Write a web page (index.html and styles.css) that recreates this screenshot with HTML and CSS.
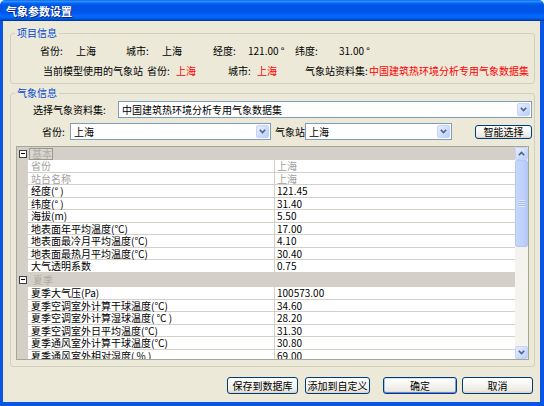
FILE: index.html
```html
<!DOCTYPE html>
<html lang="zh-CN">
<head>
<meta charset="utf-8">
<title>气象参数设置</title>
<link rel="stylesheet" href="styles.css">
</head>
<body>
<div class="window">
  <div class="titlebar">气象参数设置</div>
  <div class="frame">
    <div class="client">
      <fieldset class="group group-project">
        <legend>项目信息</legend>
        <div class="info-row info-row-1">
          <span class="cell w36">省份:</span>
          <span class="cell w50">上海</span>
          <span class="cell w36">城市:</span>
          <span class="cell w51">上海</span>
          <span class="cell w35">经度:</span>
          <span class="cell w47">121.00 °</span>
          <span class="cell w44">纬度:</span>
          <span class="cell">31.00 °</span>
        </div>
        <div class="info-row info-row-2">
          <span class="cell w104">当前模型使用的气象站</span>
          <span class="cell w29">省份:</span>
          <span class="cell w52 red">上海</span>
          <span class="cell w29">城市:</span>
          <span class="cell w48 red">上海</span>
          <span class="cell w64">气象站资料集:</span>
          <span class="cell red">中国建筑热环境分析专用气象数据集</span>
        </div>
      </fieldset>

      <fieldset class="group group-weather">
        <legend>气象信息</legend>
        <div class="form-row dataset-row">
          <span class="form-label dataset-label">选择气象资料集:</span>
          <div class="combo combo-dataset">
            <span class="combo-text">中国建筑热环境分析专用气象数据集</span>
            <span class="combo-btn"><svg width="7" height="5" viewBox="0 0 7 5"><path d="M0.8 0.8 L3.5 3.6 L6.2 0.8" fill="none" stroke="#4D6185" stroke-width="1.6"/></svg></span>
          </div>
        </div>
        <div class="form-row station-row">
          <span class="form-label prov-label">省份:</span>
          <div class="combo combo-prov">
            <span class="combo-text">上海</span>
            <span class="combo-btn"><svg width="7" height="5" viewBox="0 0 7 5"><path d="M0.8 0.8 L3.5 3.6 L6.2 0.8" fill="none" stroke="#4D6185" stroke-width="1.6"/></svg></span>
          </div>
          <span class="form-label station-label">气象站</span>
          <div class="combo combo-station">
            <span class="combo-text">上海</span>
            <span class="combo-btn"><svg width="7" height="5" viewBox="0 0 7 5"><path d="M0.8 0.8 L3.5 3.6 L6.2 0.8" fill="none" stroke="#4D6185" stroke-width="1.6"/></svg></span>
          </div>
          <button class="btn btn-smart">智能选择</button>
        </div>

        <div class="grid">
          <div class="grid-body">
            <div class="grow cat cat-head"><span class="gut"><span class="toggle"></span></span><span class="cat-label boxed">基本</span></div>
            <div class="grow disabled"><span class="gut"></span><span class="name">省份</span><span class="val">上海</span></div>
            <div class="grow disabled"><span class="gut"></span><span class="name">站台名称</span><span class="val">上海</span></div>
            <div class="grow"><span class="gut"></span><span class="name">经度(° )</span><span class="val">121.45</span></div>
            <div class="grow"><span class="gut"></span><span class="name">纬度(° )</span><span class="val">31.40</span></div>
            <div class="grow"><span class="gut"></span><span class="name">海拔(m)</span><span class="val">5.50</span></div>
            <div class="grow"><span class="gut"></span><span class="name">地表面年平均温度(℃)</span><span class="val">17.00</span></div>
            <div class="grow"><span class="gut"></span><span class="name">地表面最冷月平均温度(℃)</span><span class="val">4.10</span></div>
            <div class="grow"><span class="gut"></span><span class="name">地表面最热月平均温度(℃)</span><span class="val">30.40</span></div>
            <div class="grow"><span class="gut"></span><span class="name">大气透明系数</span><span class="val">0.75</span></div>
            <div class="grow cat cat-summer"><span class="gut"><span class="toggle"></span></span><span class="cat-label">夏季</span></div>
            <div class="grow"><span class="gut"></span><span class="name">夏季大气压(Pa)</span><span class="val">100573.00</span></div>
            <div class="grow"><span class="gut"></span><span class="name">夏季空调室外计算干球温度(℃)</span><span class="val">34.60</span></div>
            <div class="grow"><span class="gut"></span><span class="name">夏季空调室外计算湿球温度( ℃ )</span><span class="val">28.20</span></div>
            <div class="grow"><span class="gut"></span><span class="name">夏季空调室外日平均温度(℃)</span><span class="val">31.30</span></div>
            <div class="grow"><span class="gut"></span><span class="name">夏季通风室外计算干球温度(℃)</span><span class="val">30.80</span></div>
            <div class="grow"><span class="gut"></span><span class="name">夏季通风室外相对湿度( % )</span><span class="val">69.00</span></div>
          </div>
          <div class="scrollbar">
            <span class="sb-btn"><svg width="7" height="5" viewBox="0 0 7 5"><path d="M0.8 4.2 L3.5 1.4 L6.2 4.2" fill="none" stroke="#4D6185" stroke-width="1.6"/></svg></span>
            <span class="sb-thumb"><span class="sb-grip"></span></span>
            <span class="sb-track"></span>
            <span class="sb-btn"><svg width="7" height="5" viewBox="0 0 7 5"><path d="M0.8 0.8 L3.5 3.6 L6.2 0.8" fill="none" stroke="#4D6185" stroke-width="1.6"/></svg></span>
          </div>
        </div>
      </fieldset>

      <div class="buttons">
        <button class="btn btn-save">保存到数据库</button>
        <button class="btn btn-add">添加到自定义</button>
        <button class="btn btn-ok">确定</button>
        <button class="btn btn-cancel">取消</button>
      </div>
    </div>
  </div>
</div>
</body>
</html>
```

FILE: styles.css
```css
* { box-sizing: border-box; }

html, body {
  margin: 0;
  padding: 0;
  background: #ffffff;
}

body {
  width: 544px;
  height: 406px;
  overflow: hidden;
  font-family: "Noto Sans CJK SC", "Noto Sans", sans-serif;
  font-size: 10px;
  line-height: 12px;
  color: #000;
}

.window {
  width: 544px;
  height: 406px;
  display: flex;
  flex-direction: column;
  border-radius: 5px 5px 0 0;
  overflow: hidden;
}

.titlebar {
  flex: none;
  height: 21px;
  padding-left: 6px;
  display: flex;
  align-items: center;
  color: #fff;
  font-weight: bold;
  font-size: 11px;
  text-shadow: 1px 1px 0 #0a1e7a;
  background: linear-gradient(#0058ee 0%, #3593ff 5%, #288eff 8%, #127dff 11%, #036ffc 14%, #0262ee 18%, #0057e5 24%, #0054e3 30%, #0055eb 56%, #005bf5 66%, #026afe 76%, #0062ef 86%, #0052d6 92%, #0040ab 96%, #003092 100%);
}

.frame {
  flex: 1;
  padding: 0 4px 4px 3px;
  background: #0a55e4;
}

.client {
  height: 100%;
  background: #ece9d8;
  padding-top: 6px;
}

/* group boxes */
.group {
  margin: 0 5px 0 7px;
  border: 1px solid #d0d0bf;
  border-radius: 3px;
  min-width: 0;
}

.group legend {
  margin-left: 4px;
  padding: 0 2px;
  color: #0046d5;
  line-height: 12px;
}

.group-project {
  padding: 6px 0 6px 0;
}

.group-weather {
  margin-top: 3px;
  padding: 2px 0 6px 0;
}

.info-row {
  display: flex;
  height: 12px;
  white-space: nowrap;
}

.info-row-1 { margin-left: 29px; }
.info-row-2 { margin-left: 32px; margin-top: 8px; }

.cell { flex: none; }
.w29 { width: 29px; }
.w35 { width: 35px; }
.w36 { width: 36px; }
.w44 { width: 44px; }
.w47 { width: 47px; }
.w48 { width: 48px; }
.w50 { width: 50px; }
.w51 { width: 51px; }
.w52 { width: 52px; }
.w64 { width: 64px; }
.w104 { width: 104px; }

.red { color: #ff0000; }

/* form rows */
.form-row {
  display: flex;
  align-items: center;
  height: 17px;
  white-space: nowrap;
}

.dataset-row { margin-left: 22px; }
.station-row { margin-left: 31px; margin-top: 5px; }

.form-label { flex: none; }
.dataset-label { width: 85px; }
.prov-label { width: 28px; }
.station-label { width: 30px; margin-left: 4px; }

.combo {
  flex: none;
  height: 17px;
  display: flex;
  align-items: center;
  background: #fff;
  border: 1px solid #7f9db9;
  padding: 1px;
}

.combo-dataset { width: 414px; }
.combo-prov { width: 201px; }
.combo-station { width: 147px; }

.combo-text {
  flex: 1;
  padding-left: 2px;
  line-height: 12px;
}

.combo-btn, .sb-btn {
  flex: none;
  width: 13px;
  height: 13px;
  display: flex;
  align-items: center;
  justify-content: center;
  border: 1px solid #c3d3fd;
  border-radius: 2px;
  background: linear-gradient(135deg, #e6eefc 0%, #d1dffb 50%, #b9cef8 100%);
}

/* buttons */
.btn {
  flex: none;
  height: 17px;
  padding: 0;
  font: inherit;
  line-height: 12px;
  color: #000;
  border: 1px solid #003c74;
  border-radius: 3px;
  background: linear-gradient(#ffffff 0%, #f5f4ef 50%, #ebe9e0 85%, #d6d0c5 100%);
}

.btn-smart {
  width: 57px;
  height: 14px;
  margin-left: 23px;
}

.buttons {
  display: flex;
  justify-content: flex-end;
  margin-top: 10px;
  padding-right: 7px;
}

.btn-save { width: 71px; }
.btn-add { width: 65px; margin-left: 7px; }
.btn-ok {
  width: 74px;
  margin-left: 13px;
  box-shadow: inset 0 1px 0 #cee7ff, inset 0 -1px 0 #6982ee, inset 1px 0 0 #a9c2f2, inset -1px 0 0 #7d99e6;
}
.btn-cancel { width: 71px; margin-left: 5px; }

/* property grid */
.grid {
  margin: 6px 0 0 5px;
  width: 513px;
  height: 214px;
  border: 1px solid #a5a59a;
  background: #fff;
  display: flex;
  overflow: hidden;
}

.grid-body {
  flex: 1;
  overflow: hidden;
}

.grow {
  display: flex;
  height: 12.5px;
  white-space: nowrap;
  line-height: 11px;
}

.gut {
  flex: none;
  width: 11px;
  background: #d4d0c8;
  display: flex;
  align-items: center;
  justify-content: flex-end;
}

.name {
  flex: none;
  width: 247px;
  padding-left: 3px;
  border-right: 1px solid #d4d0c8;
  border-bottom: 1px solid #d4d0c8;
}

.val {
  flex: 1;
  padding-left: 2px;
  border-bottom: 1px solid #d4d0c8;
}

.disabled .name, .disabled .val { color: #a0a0a0; }

.cat {
  background: #d4d0c8;
  align-items: center;
}

.cat-head { height: 13px; }
.cat-summer { height: 14.5px; }

.toggle {
  position: relative;
  width: 8px;
  height: 8px;
  margin-right: 1px;
  border: 1px solid #404040;
  background: #fff;
}

.toggle::after {
  content: "";
  position: absolute;
  left: 1px;
  top: 2.5px;
  width: 4px;
  height: 1px;
  background: #000;
}

.cat-label {
  color: #aeaba3;
  margin-left: 1px;
  padding: 0 2px;
  line-height: 10px;
}

.cat-summer .cat-label { margin-left: 3px; }

.boxed {
  width: 24px;
  height: 12px;
  border: 1px solid #9a9893;
  background: #dad7d0;
}

.scrollbar {
  flex: none;
  width: 13px;
  display: flex;
  flex-direction: column;
  background: #f4f3ee;
}

.sb-btn { width: 13px; height: 13px; }

.sb-thumb {
  flex: none;
  height: 87px;
  border: 1px solid #b3c7f4;
  border-radius: 2px;
  background: linear-gradient(to right, #c7d7fc, #bfd1fa 60%, #b5c9f6);
  display: flex;
  align-items: center;
  justify-content: center;
}

.sb-grip {
  width: 6px;
  height: 7px;
  background: repeating-linear-gradient(#eef4fe 0 1px, #94b2ef 1px 2px);
  opacity: 0.7;
}

.sb-track { flex: 1; }
```
